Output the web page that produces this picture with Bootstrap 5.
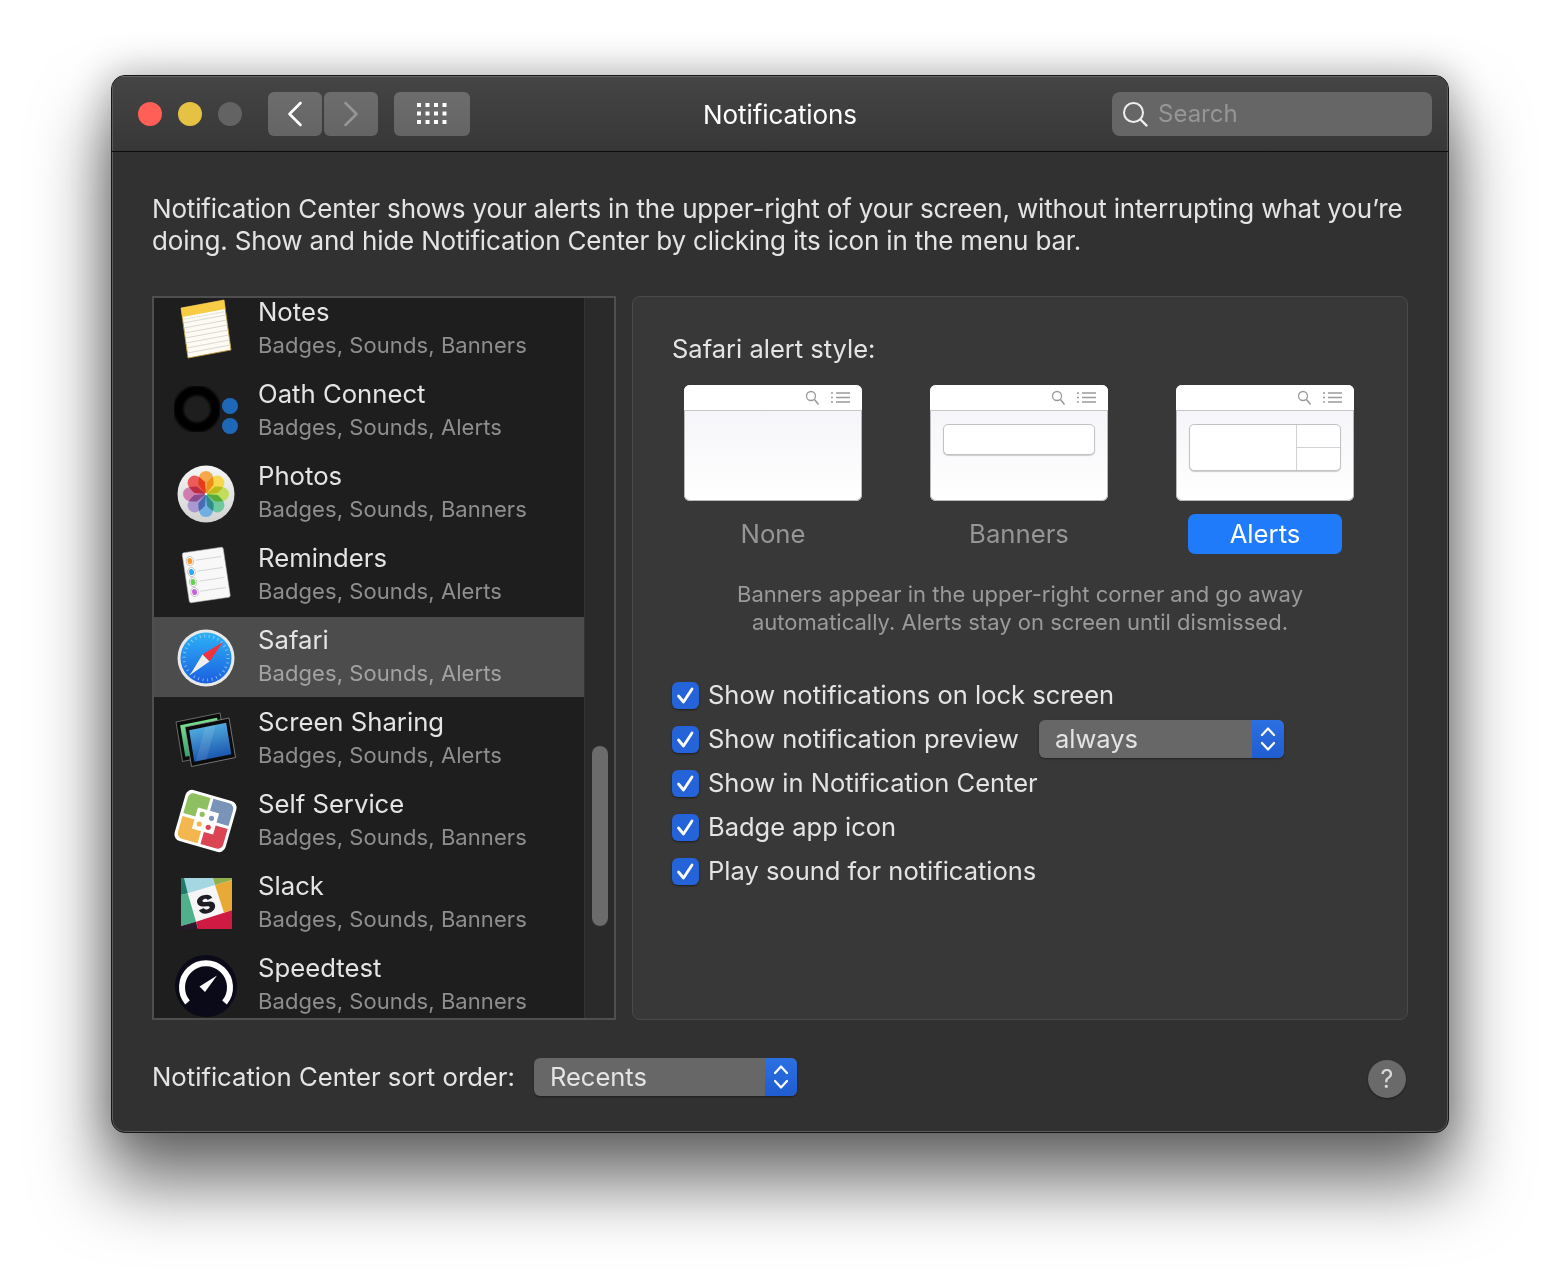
<!DOCTYPE html>
<html lang="en">
<head>
<meta charset="utf-8">
<title>Notifications</title>
<link href="https://cdn.jsdelivr.net/npm/bootstrap@5.3.0/dist/css/bootstrap.min.css" rel="stylesheet">
<style>
html,body{height:100%;background:#fff}
body{font-family:Inter,"Liberation Sans",sans-serif;overflow:hidden;padding:75px 111px 0}
.macwin{width:1338px;height:1058px;border:1px solid #161616;border-radius:14px;background:#313131;box-shadow:inset 0 0 0 1px #5c5c5c,0 46px 70px 6px rgba(0,0,0,.55),0 0 36px 4px rgba(0,0,0,.22);overflow:hidden;color:#e2e2e2}
.titlebar{height:76px;padding:0 16px 0 26px;background:linear-gradient(#454545,#373737);border-bottom:1px solid #0c0c0c;position:relative;box-shadow:inset 0 1px 0 #666,inset 1px 0 0 #5c5c5c,inset -1px 0 0 #5c5c5c}
.tl{width:24px;height:24px;border-radius:50%}
.tl-r{background:#ff5f57}.tl-y{background:#e5c244}.tl-g{background:#636363}
.tbtn{height:44px;background:linear-gradient(#6d6d6d,#646464);border-radius:6px;border:0;padding:0}
.tbtn-nav{width:54px}.tbtn-grid{width:76px}
.wtitle{position:absolute;left:0;right:0;top:22px;text-align:center;font-size:26px;line-height:34px;color:#fff;letter-spacing:-.1px}
.searchbox{width:320px;height:44px;background:#666;border-radius:8px;color:#969696;font-size:24px;padding-left:10px}
.searchbox span{margin-left:10px}
.winbody{padding:41px 40px 0 40px}
.intro{font-size:26px;letter-spacing:-.18px;line-height:32px;margin:0;height:103px;color:#e4e4e4;white-space:nowrap}
.panes{height:724px}
.applist{width:464px;border:2px solid #4f4f4f;background:#1e1e1e;overflow:hidden}
.listcol{width:430px;overflow:hidden}
.listinner{margin-top:-9px}
.approw{height:82px;padding:0 0 2px 18px;background:transparent;border:0;border-radius:0;color:#e2e2e2}
.approw.sel{background:#4c4c4c;height:80px;margin:0 0 2px;padding-bottom:0}
.appico{width:68px;height:68px;flex:none}
.apptext{margin-left:18px;margin-top:-3px}
.appname{font-size:25.7px;line-height:28px;margin:3px 0;color:#e4e4e4}
.appsub{font-size:22px;line-height:32px;color:#8e8e8e;letter-spacing:.08px}
.approw.sel .appsub{color:#a2a2a2}
.sbtrack{width:30px;border-left:1px solid #333;background:#2a2a2a;padding-top:448px}
.sbthumb{display:block;width:16px;height:180px;border-radius:8px;background:#6b6b6b;margin-left:7px}
.detail{width:776px;margin-left:16px;border:1px solid #4a4a4a;border-radius:8px;background:#383838;padding:32px 39px 0}
.dhead{font-size:25.5px;line-height:40px;margin:0 0 16px;color:#e4e4e4}
.stylerow{padding-left:12px;gap:68px}
.stylecol{width:178px}
.thumb{width:178px;height:116px;background:linear-gradient(#f3f3f8,#fff);border-radius:6px;overflow:hidden;box-shadow:0 0 0 1px #b9b9bc inset}
.thumbbar{height:26px;background:#fff;border-bottom:1px solid #c6c6c9;padding-right:10px}
.thumbbanner{width:152px;margin:13px auto 0;height:31px;background:#fff;border:1px solid #c2c2c6;border-radius:5px;box-shadow:0 1px 1px #ccc}
.thumbalert{width:152px;height:47px;margin:13px auto 0;background:#fff;border:1px solid #c2c2c6;border-radius:5px;box-shadow:0 1px 1px #ccc}
.tsplit{width:44px;margin-left:auto;border-left:1px solid #d2d2d4}
.tsplit div{height:50%}
.tsplit div:first-child{border-bottom:1px solid #d2d2d4}
.stylelbl{height:40px;margin-top:13px;width:154px;font-size:25.7px;line-height:39px;color:#969696;text-align:center;border-radius:7px;padding:0}
.stylelbl.on{background:#1f7bfa;color:#fff}
.helptext{font-size:22px;line-height:28px;color:#9a9a9a;text-align:center;margin:26px 0 37px}
.optrow{height:44px;margin:0;padding:0;font-size:25.5px;color:#e4e4e4}
.optrow .form-check-input{width:27px;height:27px;margin:0 9px 0 0;float:none;border:0;border-radius:6px;flex:none;background-color:#2463d8;background-image:url("data:image/svg+xml,%3Csvg xmlns='http://www.w3.org/2000/svg' viewBox='0 0 27 27'%3E%3Cpath d='M6.5 14l5 6 8.500-13' fill='none' stroke='%23fff' stroke-width='2.800' stroke-linecap='round' stroke-linejoin='round'/%3E%3C/svg%3E");background-size:100%;box-shadow:0 1px 2px rgba(0,0,0,.5);opacity:1}
.popup{height:38px;border-radius:6px;background:#676767;color:#e4e4e4;font-size:25.5px;overflow:hidden;box-shadow:0 1px 2px rgba(0,0,0,.4)}
.popup-a{width:245px;margin-left:20px;padding-left:16px}
.popup-b{width:263px;margin-left:19px;padding-left:16px}
.popup-arrow{width:32px;height:38px;background:linear-gradient(#2c70e2,#1f5dd0);flex:none}
.footrow{height:112px;padding-top:2px}
.footlbl{font-size:25.7px;color:#e4e4e4}
.helpbtn{width:38px;height:38px;border-radius:50%;background:#6a6a6a;color:#d8d8d8;font-size:25px;line-height:38px;text-align:center;padding:0;border:0;margin:4px 2px 0 0;box-shadow:0 1px 2px rgba(0,0,0,.4)}
</style>
</head>
<body>
<div class="macwin">
  <div class="titlebar d-flex align-items-center">
    <div class="d-flex" style="gap:16px"><span class="tl tl-r"></span><span class="tl tl-y"></span><span class="tl tl-g"></span></div>
    <button class="tbtn tbtn-nav d-flex align-items-center justify-content-center" style="margin-left:26px" aria-label="Back"><svg width="18" height="26" viewBox="0 0 18 26"><path d="M14.5 2 3.5 13l11 11" fill="none" stroke="#fff" stroke-width="2.6" stroke-linecap="round" stroke-linejoin="round"/></svg></button>
    <button class="tbtn tbtn-nav d-flex align-items-center justify-content-center" style="margin-left:2px" aria-label="Forward"><svg width="18" height="26" viewBox="0 0 18 26"><path d="M3.5 2l11 11-11 11" fill="none" stroke="#959595" stroke-width="2.6" stroke-linecap="round" stroke-linejoin="round"/></svg></button>
    <button class="tbtn tbtn-grid d-flex align-items-center justify-content-center" style="margin-left:16px" aria-label="Show all"><svg width="30" height="22" viewBox="0 0 30 22" fill="#fff"><path d="M0 0h4v4H0zM8.500 0h4v4h-4zM17 0h4v4h-4zM25.500 0h4v4h-4zM0 8.500h4v4H0zM8.500 8.500h4v4h-4zM17 8.500h4v4h-4zM25.500 8.500h4v4h-4zM0 17h4v4H0zM8.500 17h4v4h-4zM17 17h4v4h-4zM25.500 17h4v4h-4z"/></svg></button>
    <div class="wtitle">Notifications</div>
    <div class="searchbox d-flex align-items-center ms-auto"><svg width="26" height="28" viewBox="0 0 26 28"><circle cx="11.500" cy="12.500" r="9.500" fill="none" stroke="#f0f0f0" stroke-width="2"/><path d="M18.500 19.500l6 6" stroke="#f0f0f0" stroke-width="2.400" stroke-linecap="round"/></svg><span>Search</span></div>
  </div>
  <div class="winbody">
    <p class="intro">Notification Center shows your alerts in the upper-right of your screen, without interrupting what you’re<br>doing. Show and hide Notification Center by clicking its icon in the menu bar.</p>
    <div class="panes d-flex">
      <div class="applist d-flex">
        <div class="listcol">
          <div class="listinner list-group">
            <div class="approw list-group-item d-flex align-items-center">
              <svg class="appico" viewBox="0 0 68 68"><g transform="matrix(.86 -.16 .14 1 9 13)"><rect width="50" height="50" fill="#fdfbf2" stroke="#b8973f" stroke-width=".9"/><rect width="50" height="9" fill="#f9cc45"/><path d="M1 11.500h48" stroke="#bbb" stroke-width=".8" stroke-dasharray="1 1"/><path d="M0 15h50M0 20h50M0 25h50M0 30h50M0 35h50M0 40h50M0 45h50" stroke="#d4d4d0" stroke-width=".9"/></g></svg>
              <div class="apptext"><div class="appname">Notes</div><div class="appsub">Badges, Sounds, Banners</div></div>
            </div>
            <div class="approw list-group-item d-flex align-items-center">
              <svg class="appico" viewBox="0 0 68 68"><defs><filter id="oblur"><feGaussianBlur stdDeviation="1"/></filter></defs><g filter="url(#oblur)"><circle cx="25" cy="32" r="18.500" fill="none" stroke="#040404" stroke-width="10"/></g><circle cx="58" cy="29" r="8" fill="#1f68b8"/><circle cx="58" cy="49" r="8" fill="#1f68b8"/></svg>
              <div class="apptext"><div class="appname">Oath Connect</div><div class="appsub">Badges, Sounds, Alerts</div></div>
            </div>
            <div class="approw list-group-item d-flex align-items-center">
              <svg class="appico" viewBox="0 0 68 68"><defs><linearGradient id="phb" x1="0" y1="0" x2="0" y2="1"><stop offset="0" stop-color="#f6f6f6"/><stop offset="1" stop-color="#d2d2d2"/></linearGradient><path id="phpet" d="M34 35 26.500 26Q25.500 12 34 12T41.500 26Z"/></defs><circle cx="34" cy="35" r="28.500" fill="url(#phb)"/><g style="isolation:isolate"><g style="mix-blend-mode:multiply"><use href="#phpet" fill="#f5a84b"/></g><g style="mix-blend-mode:multiply"><use href="#phpet" fill="#f6d94b" transform="rotate(45 34 35)"/></g><g style="mix-blend-mode:multiply"><use href="#phpet" fill="#c2dc5c" transform="rotate(90 34 35)"/></g><g style="mix-blend-mode:multiply"><use href="#phpet" fill="#6fc99e" transform="rotate(135 34 35)"/></g><g style="mix-blend-mode:multiply"><use href="#phpet" fill="#6fb0e0" transform="rotate(180 34 35)"/></g><g style="mix-blend-mode:multiply"><use href="#phpet" fill="#a999d0" transform="rotate(225 34 35)"/></g><g style="mix-blend-mode:multiply"><use href="#phpet" fill="#d07eb0" transform="rotate(270 34 35)"/></g><g style="mix-blend-mode:multiply"><use href="#phpet" fill="#ec5a5a" transform="rotate(315 34 35)"/></g></g><circle cx="34" cy="35" r="1.300" fill="#fff"/></svg>
              <div class="apptext"><div class="appname">Photos</div><div class="appsub">Badges, Sounds, Banners</div></div>
            </div>
            <div class="approw list-group-item d-flex align-items-center">
              <svg class="appico" viewBox="0 0 68 68"><g transform="matrix(.82 -.12 .15 1 10 12)"><rect width="50" height="50" rx="2" fill="#f8f8f8" stroke="#aaa" stroke-width=".6"/><path d="M15 9h31M15 20h31M15 30h31M15 40h31" stroke="#cfcfcf" stroke-width=".9"/><g stroke="#a8a8a8" stroke-width=".7"><circle cx="8" cy="9" r="4.500" fill="#fff"/><circle cx="8" cy="20" r="4.500" fill="#fff"/><circle cx="8" cy="30" r="4.500" fill="#fff"/><circle cx="8" cy="40" r="4.500" fill="#fff"/></g><circle cx="8" cy="9" r="3" fill="#f89a2e"/><circle cx="8" cy="20" r="3" fill="#30a8f5"/><circle cx="8" cy="30" r="3" fill="#66d249"/><circle cx="8" cy="40" r="3" fill="#c663e0"/></g></svg>
              <div class="apptext"><div class="appname">Reminders</div><div class="appsub">Badges, Sounds, Alerts</div></div>
            </div>
            <div class="approw sel list-group-item d-flex align-items-center">
              <svg class="appico" viewBox="0 0 68 68"><defs><linearGradient id="sfb" x1="0" y1="0" x2="0" y2="1"><stop offset="0" stop-color="#2db2f6"/><stop offset="1" stop-color="#1a5fe0"/></linearGradient></defs><circle cx="34" cy="35" r="28.500" fill="#e9e9e9"/><circle cx="34" cy="35" r="25.500" fill="url(#sfb)"/><circle cx="34" cy="35" r="22" fill="none" stroke="#d8ebfc" stroke-width="3" stroke-dasharray="1 3.600" opacity=".55"/><path d="M37.500 38.500 30.500 31.500 51 19z" fill="#f2323b"/><path d="M37.500 38.500 30.500 31.500 18 52z" fill="#eee"/></svg>
              <div class="apptext"><div class="appname">Safari</div><div class="appsub">Badges, Sounds, Alerts</div></div>
            </div>
            <div class="approw list-group-item d-flex align-items-center">
              <svg class="appico" viewBox="0 0 68 68"><defs><linearGradient id="ssb" x1="0" y1="0" x2="0" y2="1"><stop offset="0" stop-color="#4fa8dc"/><stop offset="1" stop-color="#1b58b0"/></linearGradient><linearGradient id="ssg" x1="0" y1="0" x2="0" y2="1"><stop offset="0" stop-color="#74e08e"/><stop offset="1" stop-color="#35a06a"/></linearGradient></defs><g transform="matrix(.88 -.18 .13 .79 4 17)"><rect width="50" height="50" fill="#0b0b0b" stroke="#888" stroke-width=".8"/><rect x="4" y="5" width="42" height="40" fill="url(#ssg)"/></g><g transform="matrix(.88 -.18 .13 .79 13 22)"><rect width="50" height="50" fill="#0b0b0b" stroke="#999" stroke-width=".8"/><rect x="4" y="5" width="42" height="40" fill="url(#ssb)"/><path d="M22 5 6 45h12L34 5z" fill="#fff" opacity=".1"/></g></svg>
              <div class="apptext"><div class="appname">Screen Sharing</div><div class="appsub">Badges, Sounds, Alerts</div></div>
            </div>
            <div class="approw list-group-item d-flex align-items-center">
              <svg class="appico" viewBox="0 0 68 68"><g transform="translate(33.500 34) rotate(16)"><rect x="-26.500" y="-26.500" width="53" height="53" rx="7" fill="#fff"/><path d="M-23.500-1.500V-18a5.500 5.500 0 0 1 5.500-5.500H-1.500V-11H-11V-1.500z" fill="#8fc05f"/><path d="M-23.500-1.500V-18a5.500 5.500 0 0 1 5.500-5.500H-1.500V-11H-11V-1.500z" fill="#7a94b9" transform="rotate(90)"/><path d="M-23.500-1.500V-18a5.500 5.500 0 0 1 5.500-5.500H-1.500V-11H-11V-1.500z" fill="#da4453" transform="rotate(180)"/><path d="M-23.500-1.500V-18a5.500 5.500 0 0 1 5.500-5.500H-1.500V-11H-11V-1.500z" fill="#f4b74f" transform="rotate(270)"/></g><circle cx="30.200" cy="27.300" r="2.600" fill="#8fc05f"/><circle cx="39.500" cy="31.300" r="2.600" fill="#7a94b9"/><circle cx="36.200" cy="40.300" r="2.600" fill="#da4453"/><circle cx="27.200" cy="37" r="2.600" fill="#f4b74f"/></svg>
              <div class="apptext"><div class="appname">Self Service</div><div class="appsub">Badges, Sounds, Banners</div></div>
            </div>
            <div class="approw list-group-item d-flex align-items-center">
              <svg class="appico" viewBox="0 0 68 68"><path d="M9 9h51v51H9z" fill="#f6f6f6"/><path d="M9 26 15.700 24.300 43 16 41 9H12z" fill="#a5d7e3"/><path d="M9 9h3l3.700 15.300L9 26z" fill="#1f7a66"/><path d="M9 26l6.700-1.700L24 52.700 9 57z" fill="#4fb08b"/><path d="M9 57l15-4.300L26 60H9z" fill="#2a1a2e"/><path d="M24 52.700 52 43.700 60 41V60H26z" fill="#cf1a44"/><path d="M43 16 60 11V41L52 43.700z" fill="#e8aa35"/><path d="M41 9H60V11L43 16z" fill="#90b04e"/><text x="34" y="44" text-anchor="middle" font-family="Inter,sans-serif" font-weight="800" font-size="33" fill="#1d1d24" transform="rotate(-17 34 35)">s</text></svg>
              <div class="apptext"><div class="appname">Slack</div><div class="appsub">Badges, Sounds, Banners</div></div>
            </div>
            <div class="approw list-group-item d-flex align-items-center">
              <svg class="appico" viewBox="0 0 68 68"><circle cx="34" cy="35" r="31" fill="#0a0a18"/><path d="M15.500 51.500A24 24 0 1 1 52.500 51.500" fill="none" stroke="#fff" stroke-width="6"/><path d="M27.500 35.500 33 41 45 24.500z" fill="#fff"/></svg>
              <div class="apptext"><div class="appname">Speedtest</div><div class="appsub">Badges, Sounds, Banners</div></div>
            </div>
          </div>
        </div>
        <div class="sbtrack"><span class="sbthumb"></span></div>
      </div>
      <div class="detail">
        <h2 class="dhead fw-normal">Safari alert style:</h2>
        <div class="stylerow d-flex">
          <div class="stylecol d-flex flex-column align-items-center">
            <div class="thumb"><div class="thumbbar d-flex justify-content-end align-items-center"><svg width="48" height="16" viewBox="0 0 48 16"><circle cx="7" cy="6" r="4.500" fill="none" stroke="#9a9a9a" stroke-width="1.300"/><path d="M10.500 9.500l4 5" stroke="#9a9a9a" stroke-width="1.500"/><path d="M27 3h2M32 3h14M27 7.500h2M32 7.500h14M27 12h2M32 12h14" stroke="#9a9a9a" stroke-width="1.400"/></svg></div></div>
            <div class="stylelbl">None</div>
          </div>
          <div class="stylecol d-flex flex-column align-items-center">
            <div class="thumb"><div class="thumbbar d-flex justify-content-end align-items-center"><svg width="48" height="16" viewBox="0 0 48 16"><circle cx="7" cy="6" r="4.500" fill="none" stroke="#9a9a9a" stroke-width="1.300"/><path d="M10.500 9.500l4 5" stroke="#9a9a9a" stroke-width="1.500"/><path d="M27 3h2M32 3h14M27 7.500h2M32 7.500h14M27 12h2M32 12h14" stroke="#9a9a9a" stroke-width="1.400"/></svg></div><div class="thumbbanner"></div></div>
            <div class="stylelbl">Banners</div>
          </div>
          <div class="stylecol d-flex flex-column align-items-center">
            <div class="thumb"><div class="thumbbar d-flex justify-content-end align-items-center"><svg width="48" height="16" viewBox="0 0 48 16"><circle cx="7" cy="6" r="4.500" fill="none" stroke="#9a9a9a" stroke-width="1.300"/><path d="M10.500 9.500l4 5" stroke="#9a9a9a" stroke-width="1.500"/><path d="M27 3h2M32 3h14M27 7.500h2M32 7.500h14M27 12h2M32 12h14" stroke="#9a9a9a" stroke-width="1.400"/></svg></div><div class="thumbalert d-flex"><div class="tsplit d-flex flex-column"><div></div><div></div></div></div></div>
            <div class="stylelbl on">Alerts</div>
          </div>
        </div>
        <p class="helptext">Banners appear in the upper-right corner and go away<br>automatically. Alerts stay on screen until dismissed.</p>
        <label class="optrow form-check d-flex align-items-center"><input class="form-check-input" type="checkbox" checked>Show notifications on lock screen</label>
        <div class="d-flex align-items-center">
          <label class="optrow form-check d-flex align-items-center"><input class="form-check-input" type="checkbox" checked>Show notification preview</label>
          <div class="popup popup-a d-flex align-items-center justify-content-between"><span>always</span><span class="popup-arrow d-flex align-items-center justify-content-center"><svg width="16" height="28" viewBox="0 0 16 28"><path d="M2 10l6-6.500 6 6.500M2 18l6 6.500 6-6.500" fill="none" stroke="#fff" stroke-width="2.200" stroke-linecap="round" stroke-linejoin="round"/></svg></span></div>
        </div>
        <label class="optrow form-check d-flex align-items-center"><input class="form-check-input" type="checkbox" checked>Show in Notification Center</label>
        <label class="optrow form-check d-flex align-items-center"><input class="form-check-input" type="checkbox" checked>Badge app icon</label>
        <label class="optrow form-check d-flex align-items-center"><input class="form-check-input" type="checkbox" checked>Play sound for notifications</label>
      </div>
    </div>
    <div class="footrow d-flex align-items-center">
      <span class="footlbl">Notification Center sort order:</span>
      <div class="popup popup-b d-flex align-items-center justify-content-between"><span>Recents</span><span class="popup-arrow d-flex align-items-center justify-content-center"><svg width="16" height="28" viewBox="0 0 16 28"><path d="M2 10l6-6.500 6 6.500M2 18l6 6.500 6-6.500" fill="none" stroke="#fff" stroke-width="2.200" stroke-linecap="round" stroke-linejoin="round"/></svg></span></div>
      <button class="helpbtn ms-auto">?</button>
    </div>
  </div>
</div>
<script src="https://cdn.jsdelivr.net/npm/bootstrap@5.3.0/dist/js/bootstrap.bundle.min.js"></script>
</body>
</html>
